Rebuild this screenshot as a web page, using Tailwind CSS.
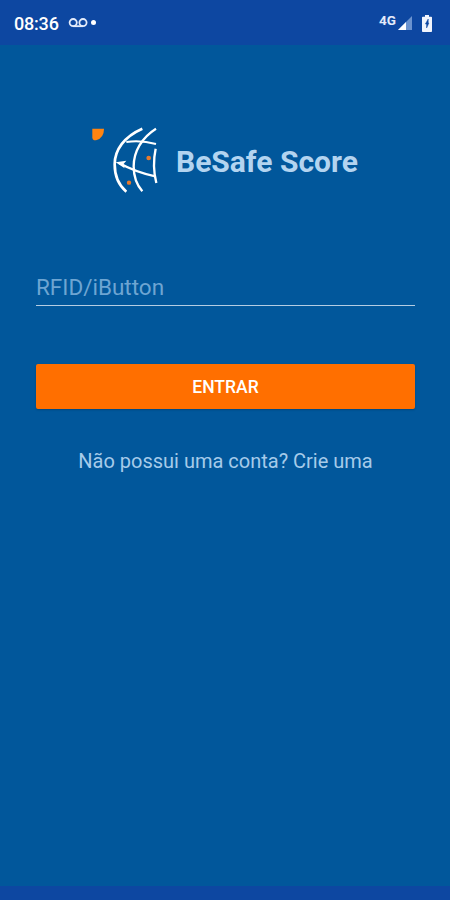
<!DOCTYPE html>
<html lang="pt-BR">
<head>
  <meta charset="UTF-8" />
  <meta name="viewport" content="width=device-width, initial-scale=1.0"/>
  <title>BeSafe Score</title>
  <script src="https://cdn.jsdelivr.net/npm/@tailwindcss/browser@4"></script>
</head>
<body class="bg-[#01579b] h-screen flex flex-col overflow-hidden font-['Roboto',sans-serif]">

  <!-- Status bar -->
  <header class="h-[45px] shrink-0 bg-[#0d47a1] flex items-center pl-3.5 pr-[18px] text-white">
    <span class="text-[18px] font-medium leading-none tracking-[-0.2px] mt-0.5">08:36</span>
    <svg class="ml-[9px] w-5 h-3" viewBox="0 0 20 12" fill="none" stroke="#e3ebfa" stroke-width="1.8">
      <circle cx="5.2" cy="5.600" r="3.6"/>
      <circle cx="15" cy="5.600" r="3.6"/>
      <path d="M5.2 9.2h9.8"/>
    </svg>
    <span class="ml-[3px] size-[5px] rounded-full bg-white"></span>
    <span class="ml-auto -mt-1 text-[13.500px] font-bold leading-none text-[#e3ebfa]">4G</span>
    <svg class="ml-0.5 mt-px w-[14px] h-[14px]" viewBox="0 0 14 14">
      <path d="M14 0v14H0z" fill="#6b93cf"/>
      <path d="M8 6v8H0z" fill="#fff"/>
    </svg>
    <svg class="ml-[10px] mt-0.5 w-[10px] h-[17px]" viewBox="0 0 10 17">
      <path d="M3 0h4v1.8h2.2q.8 0 .8.8v13.600q0 .8-.8.8H.8q-.8 0-.8-.8V2.600q0-.8.8-.8H3z" fill="#f1f5fd"/>
      <path d="M6.200 4 3.400 9h1.200v4L6.900 8h-.7z" fill="#0d47a1" stroke="#0d47a1" stroke-width=".5"/>
    </svg>
  </header>

  <!-- Login -->
  <main class="flex-1 flex flex-col pl-9 pr-[35px] pt-20">
    <div class="flex items-center pl-[54px]">
      <svg class="size-[70px] shrink-0" viewBox="30 30 210 210" fill="none" stroke="#fff">
        <path d="M37 41h35q0 28-24 35h-6q-5-3-5-8z" fill="#ff8410" stroke="none"/>
        <path d="M187 41C132 65 104 105 104 148C104 184 116 211 139 230" stroke-width="8"/>
        <path d="M228 41C185 68 161 110 161 154C161 185 171 211 187 229" stroke-width="7"/>
        <path d="M139 81Q183 75 228 87" stroke-width="6"/>
        <path d="M227 101Q216 152 229 204" stroke-width="7"/>
        <path d="M117 144Q168 172 226 184" stroke-width="7"/>
        <path d="M107 142 139 137 130 148 134 160z" fill="#fff" stroke="none"/>
        <circle cx="206" cy="129" r="7" fill="#e87a2c" stroke="none"/>
        <circle cx="147" cy="203" r="6.500" fill="#e87a2c" stroke="none"/>
      </svg>
      <h1 class="ml-4 mt-1 text-[30px] leading-none font-bold whitespace-nowrap text-[#b3d4f0]">BeSafe Score</h1>
    </div>

    <input type="text" placeholder="RFID/iButton" class="mt-[71px] h-10 w-full pt-0.5 border-b border-[#b4cde3] text-[22.500px] text-white outline-none placeholder:text-[#6ea5d2]">

    <button class="mt-[58px] h-[45px] w-full rounded-[2px] bg-[#ff6f00] pt-0.5 text-[17.500px] font-medium text-white shadow-[0_1px_2px_rgba(0,0,0,0.2)]">ENTRAR</button>

    <a href="#" class="mt-[38px] text-center text-[20px] leading-7 text-[#a6cbea]">Não possui uma conta? Crie uma</a>
  </main>

  <!-- Navigation bar -->
  <footer class="h-[14px] shrink-0 bg-[#0d47a1]"></footer>

</body>
</html>
